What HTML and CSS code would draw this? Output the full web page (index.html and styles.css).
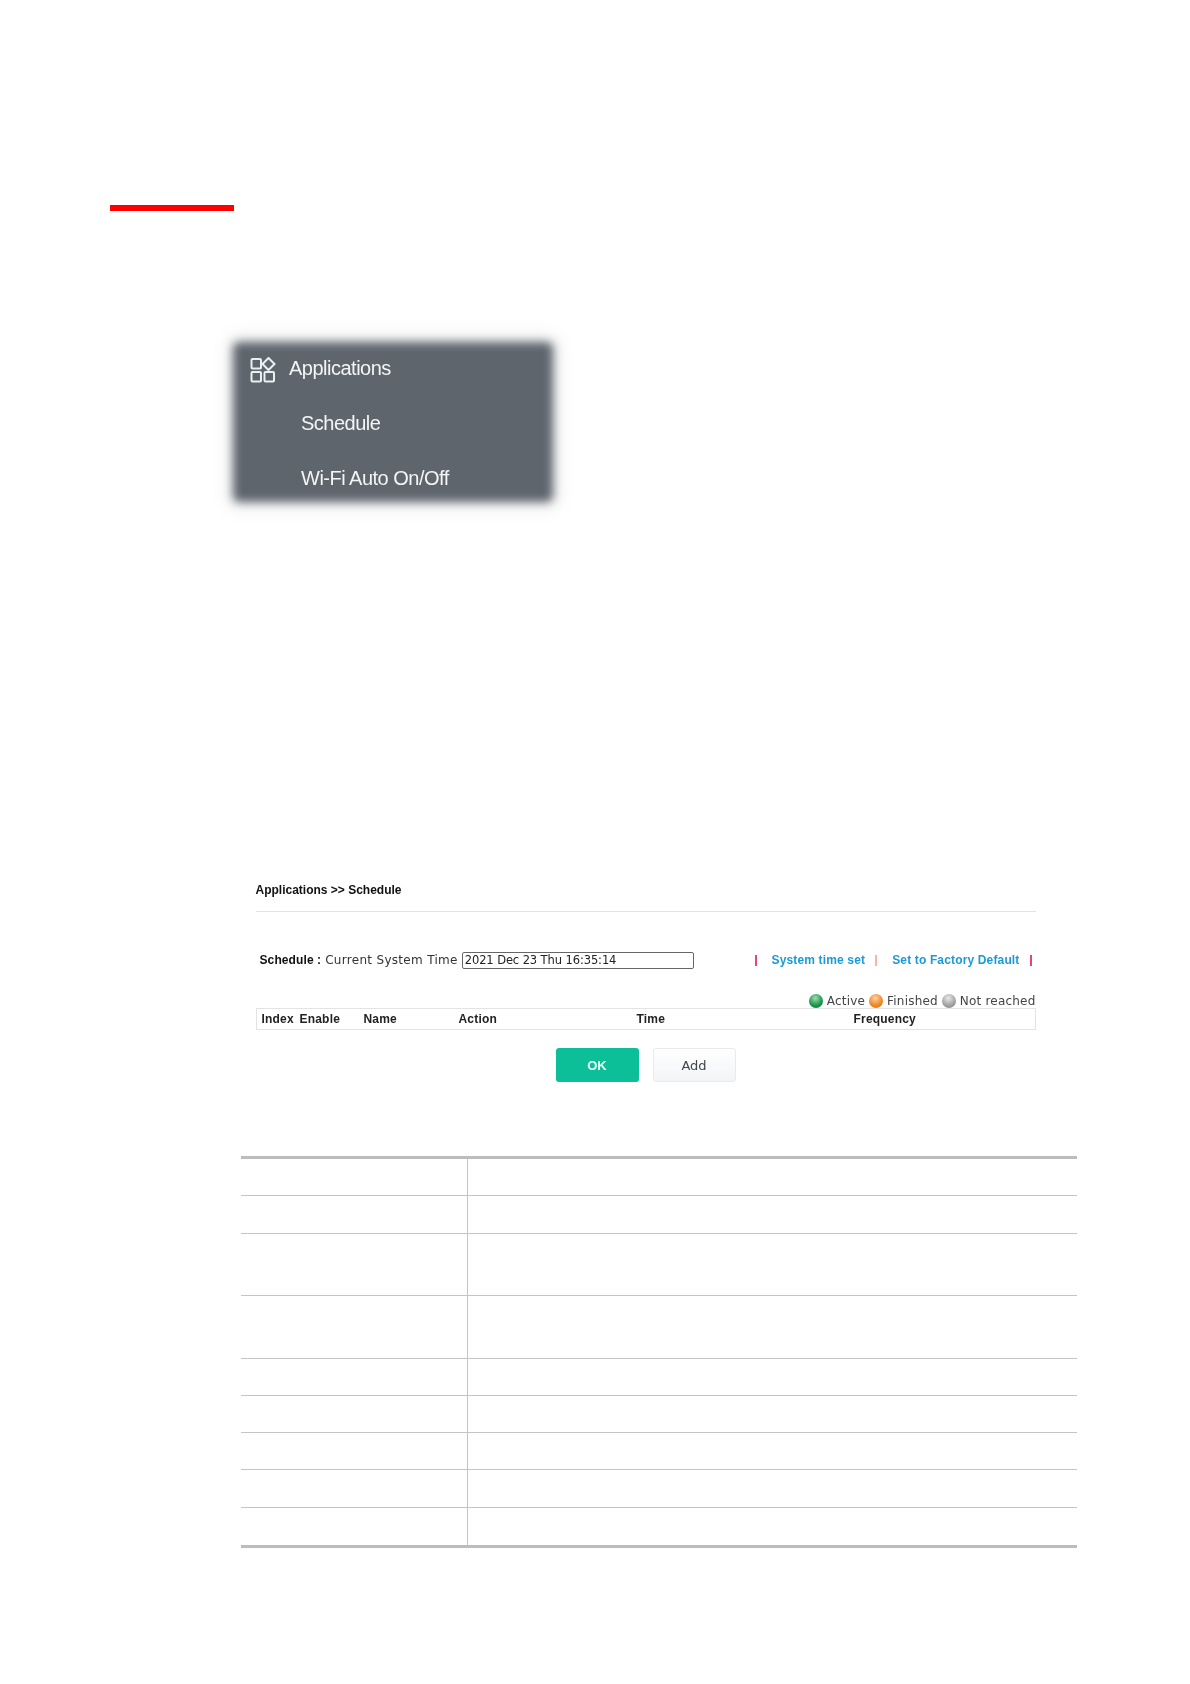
FILE: index.html
```html
<!DOCTYPE html>
<html lang="en">
<head>
<meta charset="utf-8">
<title>Applications &gt;&gt; Schedule</title>
<link rel="stylesheet" href="styles.css">
</head>
<body>
<div class="page">
  <div class="accent"></div>

  <nav class="menu">
    <div class="menu-head">
      <svg class="menu-icon" viewBox="0 0 26 26" width="26" height="26" aria-hidden="true">
        <rect x="1.5" y="2" width="9.5" height="9.5" rx="1" />
        <path d="M18.5 1 L24.5 7 L18.5 13 L12.5 7 Z" />
        <rect x="1.5" y="15" width="9.5" height="9.5" rx="1" />
        <rect x="14.5" y="15" width="9.5" height="9.5" rx="1" />
      </svg>
      <span>Applications</span>
    </div>
    <div class="menu-item">Schedule</div>
    <div class="menu-item">Wi-Fi Auto On/Off</div>
  </nav>

  <section class="screen">
    <h1 class="crumb">Applications &gt;&gt; Schedule</h1>
    <div class="time-row">
      <div class="time-left">
        <b>Schedule :</b>
        <span>Current System Time</span>
        <span class="time-box">2021 Dec 23 Thu 16:35:14</span>
      </div>
      <div class="links">
        <i class="sep"></i>
        <a>System time set</a>
        <i class="sep pale"></i>
        <a>Set to Factory Default</a>
        <i class="sep"></i>
      </div>
    </div>
    <div class="legend">
      <i class="dot green"></i><span>Active</span>
      <i class="dot orange"></i><span>Finished</span>
      <i class="dot gray"></i><span>Not reached</span>
    </div>
    <div class="thead">
      <span>Index</span>
      <span>Enable</span>
      <span>Name</span>
      <span>Action</span>
      <span>Time</span>
      <span>Frequency</span>
    </div>
    <div class="buttons">
      <button class="btn ok" type="button">OK</button>
      <button class="btn add" type="button">Add</button>
    </div>
  </section>

  <div class="params">
    <div class="prow"><div class="pcell"></div><div class="pcell"></div></div>
    <div class="prow"><div class="pcell"></div><div class="pcell"></div></div>
    <div class="prow tall"><div class="pcell"></div><div class="pcell"></div></div>
    <div class="prow tall"><div class="pcell"></div><div class="pcell"></div></div>
    <div class="prow"><div class="pcell"></div><div class="pcell"></div></div>
    <div class="prow"><div class="pcell"></div><div class="pcell"></div></div>
    <div class="prow"><div class="pcell"></div><div class="pcell"></div></div>
    <div class="prow"><div class="pcell"></div><div class="pcell"></div></div>
    <div class="prow"><div class="pcell"></div><div class="pcell"></div></div>
  </div>
</div>
</body>
</html>
```
FILE: styles.css
```css
* { box-sizing: border-box; }
html, body { margin: 0; padding: 0; background: #fff; }
body { font-family: "DejaVu Sans", sans-serif; color: #222; }

.page {
  width: 1190px;
  height: 1684px;
  padding: 205px 0 0 110px;
  overflow: hidden;
}

.accent { width: 124px; height: 6px; background: #f00; }

.menu {
  position: relative;
  z-index: 0;
  width: 320px;
  height: 160px;
  margin: 131px 0 0 123px;
  padding: 6px 0 0 17px;
  color: #f2f5f5;
  font-family: "Liberation Sans", sans-serif;
  font-size: 20px;
  letter-spacing: -.5px;
}
.menu::before {
  content: "";
  position: absolute;
  inset: 0;
  z-index: -1;
  background: #5f656d;
  border-radius: 6px;
  filter: blur(5px);
  box-shadow: 0 0 12px 6px rgba(95, 101, 109, .14);
}
.menu-head { display: flex; align-items: center; gap: 13px; height: 40px; filter: blur(.6px); }
.menu-icon { fill: none; stroke: #e8f0f0; stroke-width: 2; margin-top: 4px; }
.menu-item { height: 54.5px; padding: 24px 0 0 51px; filter: blur(.6px); }

.screen { width: 780px; margin: 0 0 0 145.5px; padding-top: 378px; font-size: 12px; filter: blur(.3px); }

.crumb {
  margin: 0;
  height: 31px;
  font: bold 12px/20px "Liberation Sans", sans-serif;
  color: #111;
  border-bottom: 1px solid #e2e2e2;
  box-sizing: content-box;
}

.time-row {
  display: flex;
  align-items: center;
  justify-content: space-between;
  height: 16px;
  margin-top: 40px;
  padding: 0 4px 0 4px;
}
.time-left { display: flex; align-items: center; gap: 4px; white-space: nowrap; }
.time-left b { color: #111; font-weight: bold; font-family: "Liberation Sans", sans-serif; letter-spacing: .1px; }
.time-left span { color: #333; letter-spacing: .3px; }
.time-left .time-box {
  width: 232px;
  height: 17px;
  padding-left: 2px;
  border: 1px solid #666;
  border-radius: 2px;
  font-size: 11.5px;
  line-height: 15px;
  letter-spacing: -.1px;
  color: #222;
}

.links { display: flex; align-items: center; color: #1d9ad6; font: bold 12px "Liberation Sans", sans-serif; letter-spacing: .15px; }
.links a { margin: 0 10px 0 15px; }
.sep { width: 2px; height: 11px; background: #e8447c; }
.sep.pale { background: #f5b5a8; }

.legend {
  display: flex;
  justify-content: flex-end;
  align-items: center;
  gap: 4px;
  height: 16px;
  margin-top: 25px;
  font-size: 12px;
  letter-spacing: .2px;
  color: #444;
}
.dot { width: 14px; height: 14px; border-radius: 50%; }
.green { background: radial-gradient(circle at 45% 30%, #9fdcae, #1f9a50 55%, #0c6a32); }
.orange { background: radial-gradient(circle at 45% 30%, #fbd3a3, #f08a2a 55%, #d96d12); }
.gray { background: radial-gradient(circle at 45% 30%, #e8e8e8, #a6a6a6 55%, #7c7c7c); }

.thead {
  display: grid;
  grid-template-columns: 38px 64px 95px 178px 217px 1fr;
  align-items: center;
  height: 22px;
  margin-top: -1px;
  padding-left: 5px;
  border: 1px solid #e2e4e4;
  font: bold 12px "Liberation Sans", sans-serif;
  letter-spacing: .2px;
  color: #222;
}

.buttons { display: flex; justify-content: center; gap: 14px; margin-top: 18px; }
.btn { width: 83px; height: 34px; border-radius: 3px; font-size: 13px; padding: 0; }
.ok { background: #0dbf98; border: 0; color: #e8fff8; font-family: "Liberation Sans", sans-serif; font-weight: bold; }
.add {
  background: linear-gradient(#fff, #f2f4f6);
  border: 1px solid #e8eaec;
  color: #444;
  font-family: "DejaVu Sans", sans-serif;
}

.params {
  width: 836px;
  margin: 74px 0 0 131px;
  border-top: 3px solid #bcbcbc;
  border-bottom: 3px solid #bcbcbc;
}
.prow { display: grid; grid-template-columns: 227px 1fr; height: 37.3px; border-bottom: 1px solid #c4c4c4; }
.prow:last-child { border-bottom: 0; }
.prow.tall { height: 62.5px; }
.pcell:first-child { border-right: 1px solid #c4c4c4; }
```
